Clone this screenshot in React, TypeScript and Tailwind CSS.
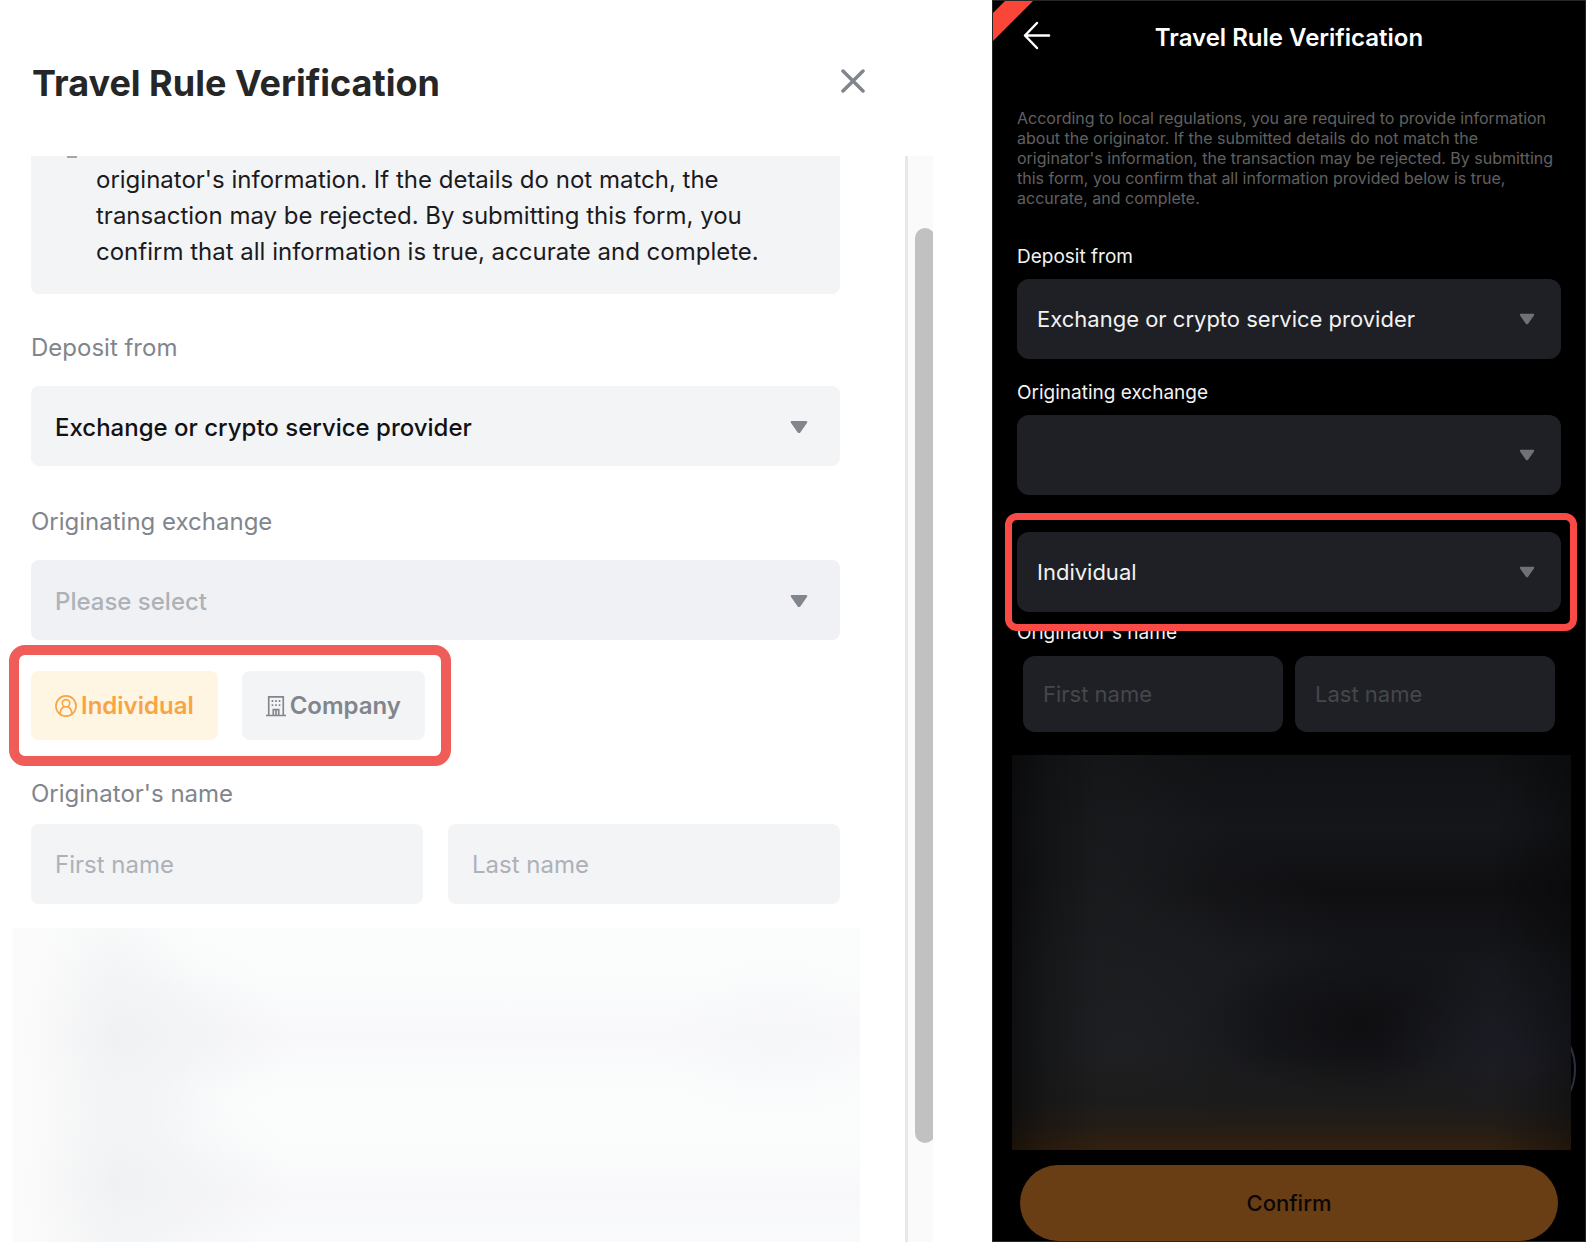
import React, { useId, useState } from 'react';

function Caret({ className }: { className: string }) {
  return (
    <svg viewBox="0 0 18 14" className={className} aria-hidden="true">
      <path d="M1.800 1h14.400c1 0 1.500 1 .9 1.800l-6.800 9.600c-.7.900-1.900.900-2.600 0L.9 2.800C.3 2 .8 1 1.800 1z" fill="currentColor" />
    </svg>
  );
}

function UserIcon() {
  return (
    <svg viewBox="0 0 24 24" className="size-[22px] shrink-0" fill="none" stroke="currentColor" strokeWidth="1.800" strokeLinecap="round" aria-hidden="true">
      <circle cx="12" cy="12" r="11" />
      <circle cx="12" cy="9" r="4" />
      <path d="M5.500 20c.4-4 2.300-6 4.300-7.200M18.500 20c-.4-4-2.300-6-4.300-7.200" />
    </svg>
  );
}

function BuildingIcon() {
  return (
    <svg viewBox="0 0 22 24" className="h-[22px] w-5 shrink-0" fill="none" stroke="currentColor" strokeWidth="1.800" aria-hidden="true">
      <path d="M0 22.500h22M3 22.500V2h16v20.500M8 22.500v-6.500h6v6.500M11 16v6" />
      <path d="M6.200 6.500H8M10.100 6.500h1.800M14 6.500h1.800M6.200 11H8M10.100 11h1.800M14 11h1.800" strokeWidth="2" />
    </svg>
  );
}

function LightSelect({ label, options, filled }: { label: string; options: string[]; filled: boolean }) {
  const id = useId();
  return (
    <div className="flex flex-col gap-5">
      <label htmlFor={id} className="text-2xl leading-9 text-[#81858c]">{label}</label>
      <div className="relative">
        <select
          id={id}
          className={
            filled
              ? 'block h-20 w-full appearance-none rounded-lg bg-[#f3f4f6] px-6 pt-1 text-2xl font-medium text-[#121214]'
              : 'block h-20 w-full appearance-none rounded-lg bg-[#f0f1f5] px-6 pt-1 text-2xl font-medium text-[#adb1b8]'
          }
        >
          {options.map((o) => <option key={o}>{o}</option>)}
        </select>
        <Caret className="pointer-events-none absolute top-[34px] right-8 h-[14px] w-[18px] text-[#81858c]" />
      </div>
    </div>
  );
}

function DarkSelect({ label, options }: { label: string; options: string[] }) {
  return (
    <div className="relative">
      <select
        aria-label={label}
        className="block h-20 w-full appearance-none rounded-xl bg-[#1f2025] px-5 text-[22px] text-[#f2f2f2]"
      >
        {options.map((o) => <option key={o}>{o}</option>)}
      </select>
      <Caret className="pointer-events-none absolute top-[34px] right-[26px] h-3 w-4 text-[#707176]" />
    </div>
  );
}

function WebDialog() {
  const [kind, setKind] = useState('Individual');
  return (
    <section className="flex min-h-screen min-w-0 flex-col bg-white pr-[59px]">
      <header className="flex items-center justify-between pt-14 pr-[66px] pb-[46px] pl-8">
        <h1 className="text-4xl leading-[54px] font-bold text-[#262626]">Travel Rule Verification</h1>
        <button type="button" aria-label="Close" className="text-[#81858c]">
          <svg viewBox="0 0 28 28" className="size-7" fill="none" stroke="currentColor" strokeWidth="3.500" strokeLinecap="round" aria-hidden="true">
            <path d="M4 2l20 20M24 2L4 22" />
          </svg>
        </button>
      </header>
      <div className="flex flex-1">
        <div className="flex min-w-0 flex-1 flex-col pr-[45px] pl-[13px]">
          <div className="flex flex-col pr-5 pl-[18px]">
            <div className="relative overflow-hidden rounded-b-lg bg-[#f3f4f6] pt-1.5 pr-14 pb-6 pl-[65px]">
              <span className="absolute top-0 left-9 h-0.5 w-2.5 bg-[#a5a6a9]" />
              <p className="text-2xl leading-9 text-[#1b1b1e]">
                originator's information. If the details do not match, the transaction may be rejected. By submitting this form, you confirm that all information is true, accurate and complete.
              </p>
            </div>
            <div className="mt-9">
              <LightSelect label="Deposit from" options={['Exchange or crypto service provider']} filled />
            </div>
            <div className="mt-[38px]">
              <LightSelect label="Originating exchange" options={['Please select']} filled={false} />
            </div>
            <div className="mt-[5px] -ml-[22px] flex gap-6 self-start rounded-2xl border-[10px] border-[#f05c57] py-4 pr-4 pl-3">
              <button
                type="button"
                onClick={() => setKind('Individual')}
                aria-pressed={kind === 'Individual'}
                className="flex h-[69px] items-center gap-1 rounded-lg bg-[#fff5e3] px-6 text-2xl font-semibold text-[#f7a444]"
              >
                <UserIcon />
                Individual
              </button>
              <button
                type="button"
                onClick={() => setKind('Company')}
                aria-pressed={kind === 'Company'}
                className="flex h-[69px] items-center gap-1 rounded-lg bg-[#f3f4f6] px-6 text-2xl font-semibold text-[#81858c]"
              >
                <BuildingIcon />
                Company
              </button>
            </div>
            <fieldset className="mt-2.5">
              <legend className="text-2xl leading-9 text-[#81858c]">Originator's name</legend>
              <div className="mt-3 grid grid-cols-2 gap-[25px]">
                <input aria-label="First name" placeholder="First name" className="h-20 min-w-0 rounded-lg bg-[#f3f4f6] px-6 text-2xl placeholder:text-[#adb1b8]" />
                <input aria-label="Last name" placeholder="Last name" className="h-20 min-w-0 rounded-lg bg-[#f3f4f6] px-6 text-2xl placeholder:text-[#adb1b8]" />
              </div>
            </fieldset>
          </div>
          <div className="mt-6 min-h-[300px] flex-1 bg-[#fbfcfc] bg-[linear-gradient(to_right,#fbfbfb,#fbfbfbaa_4%,#fbfbfb00_12%),radial-gradient(ellipse_180px_110px_at_12%_35%,#f0f1f3,#f0f1f300),radial-gradient(ellipse_180px_110px_at_12%_81%,#f0f1f3,#f0f1f300),radial-gradient(ellipse_100px_500px_at_10%_50%,#f5f6f7,#f5f6f700),radial-gradient(ellipse_120px_80px_at_90%_35%,#f6f7f9,#f6f7f900),linear-gradient(to_bottom,transparent_15%,#f8f8fb_34%,transparent_52%,transparent_68%,#f8f8fb_85%,#f9fafc)]" />
        </div>
        <div className="flex w-7 flex-col overflow-hidden border-l-[3px] border-[#e8e8e8] bg-[#fafafa] pt-[72px] pb-[99px]">
          <div className="ml-[7px] w-5 flex-1 rounded-full bg-[#c1c1c1]" />
        </div>
      </div>
    </section>
  );
}

function MobileScreen() {
  return (
    <section className="relative flex min-h-screen min-w-0 flex-col overflow-hidden border border-[#262626] bg-black px-6">
      <svg viewBox="0 0 40 40" className="absolute top-0 left-0 size-10" aria-hidden="true">
        <path d="M12 0h28L0 40V12z" fill="#fa4638" />
      </svg>
      <header className="relative flex h-[74px] items-center justify-center">
        <button type="button" aria-label="Back" className="absolute top-5 left-[5px] text-white">
          <svg viewBox="0 0 30 30" className="size-[30px]" fill="none" stroke="currentColor" strokeWidth="2.500" strokeLinecap="round" strokeLinejoin="round" aria-hidden="true">
            <path d="M15 2L3 14.500 15 27M3 14.500h24" />
          </svg>
        </button>
        <h2 className="text-2xl font-semibold text-white">Travel Rule Verification</h2>
      </header>
      <p className="mt-[33px] text-base leading-5 text-[#606060]">
        According to local regulations, you are required to provide information about the originator. If the submitted details do not match the originator's information, the transaction may be rejected. By submitting this form, you confirm that all information provided below is true, accurate, and complete.
      </p>
      <div className="mt-[33px] flex flex-col gap-1.5">
        <span className="text-[19px] leading-8 text-[#f2f2f2]">Deposit from</span>
        <DarkSelect label="Deposit from" options={['Exchange or crypto service provider']} />
      </div>
      <div className="mt-[18px] flex flex-col gap-1.5">
        <span className="text-[19px] leading-8 text-[#f2f2f2]">Originating exchange</span>
        <DarkSelect label="Originating exchange" options={['']} />
      </div>
      <div className="relative z-10 -mr-4 -ml-3 mt-[18px] rounded-xl border-[7px] border-[#fa4a45] py-3 pr-[9px] pl-[5px]">
        <DarkSelect label="Account type" options={['Individual', 'Company']} />
      </div>
      <fieldset className="-mt-3">
        <legend className="text-[19px] leading-7 text-[#f2f2f2]">Originator's name</legend>
        <div className="mt-[9px] grid grid-cols-2 gap-3 px-1.5">
          <input aria-label="First name" placeholder="First name" className="h-[76px] min-w-0 rounded-xl bg-[#1f2025] px-5 text-[22px] text-white placeholder:text-[#45474b]" />
          <input aria-label="Last name" placeholder="Last name" className="h-[76px] min-w-0 rounded-xl bg-[#1f2025] px-5 text-[22px] text-white placeholder:text-[#45474b]" />
        </div>
      </fieldset>
      <div className="relative -mr-2.5 -ml-[5px] mt-[23px] min-h-[300px] flex-1">
        <span className="absolute -right-[5px] bottom-[26px] size-[110px] rounded-full border-2 border-[#2c3140]" />
        <div className="absolute inset-0 bg-[#121215] bg-[linear-gradient(to_right,#0007,#0003_6%,#0000_16%,#0000_86%,#0005),linear-gradient(to_top,#33200f,#241d17_6%,#1d1c1bcc_12%,#1b1b1d00_24%),radial-gradient(ellipse_160px_130px_at_93%_80%,#1e1f28,#1e1f2800),radial-gradient(ellipse_170px_80px_at_62%_68%,#0f0f12,#0f0f1200),radial-gradient(ellipse_260px_260px_at_20%_76%,#1e1f22,#1e1f2200),radial-gradient(ellipse_140px_500px_at_14%_50%,#18191b,#18191b00),linear-gradient(to_bottom,#101113,#15161a_18%,#0f0f12_34%,#15161a_52%,#141518)]" />
      </div>
      <div className="mt-[15px] px-[3px]">
        <button type="button" className="block h-[76px] w-full rounded-full bg-[#693e14] text-[22px] font-medium text-[#0c0705]">Confirm</button>
      </div>
    </section>
  );
}

export default function App() {
  return (
    <main className="grid min-h-screen grid-cols-[992fr_594fr] bg-white font-['Inter',sans-serif]">
      <WebDialog />
      <MobileScreen />
    </main>
  );
}
